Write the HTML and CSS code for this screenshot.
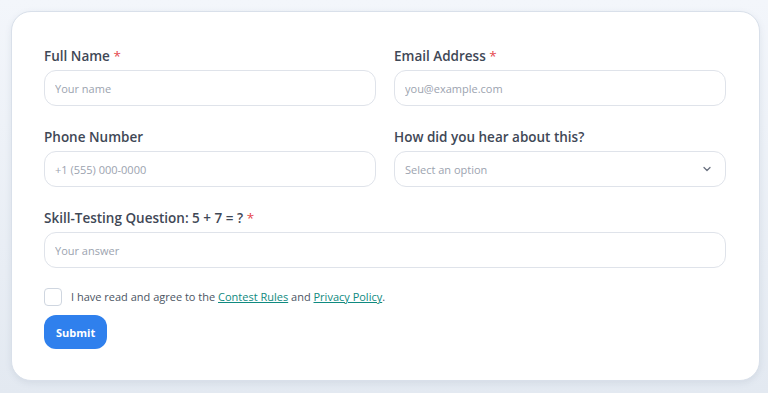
FILE: index.html
```html
<!DOCTYPE html>
<html lang="en">
<head>
    <meta charset="UTF-8">
    <meta name="viewport" content="width=device-width, initial-scale=1.0">
    <title>Contest Entry Form</title>
    <link rel="stylesheet" href="styles.css">
</head>
<body>

<div class="card">
    <form class="entry-form">
        <div class="grid">
            <div class="field">
                <label for="name">Full Name <span class="req">*</span></label>
                <input type="text" id="name" placeholder="Your name">
            </div>
            <div class="field">
                <label for="email">Email Address <span class="req">*</span></label>
                <input type="email" id="email" placeholder="you@example.com">
            </div>
            <div class="field">
                <label for="phone">Phone Number</label>
                <input type="tel" id="phone" placeholder="+1 (555) 000-0000">
            </div>
            <div class="field">
                <label for="source">How did you hear about this?</label>
                <div class="select-wrap">
                    <select id="source">
                        <option>Select an option</option>
                        <option>Social media</option>
                        <option>A friend</option>
                        <option>Email newsletter</option>
                    </select>
                    <svg class="chevron" width="10" height="10" viewBox="0 0 10 10">
                        <path d="M2 3.5 L5 6.5 L8 3.5" fill="none" stroke="#6b7280" stroke-width="1.3" stroke-linecap="round" stroke-linejoin="round"/>
                    </svg>
                </div>
            </div>
            <div class="field full">
                <label for="answer">Skill-Testing Question: 5 + 7 = ? <span class="req">*</span></label>
                <input type="text" id="answer" placeholder="Your answer">
            </div>
        </div>

        <div class="agree">
            <input type="checkbox" id="agree" class="check">
            <label for="agree">I have read and agree to the <a href="#">Contest Rules</a> and <a href="#">Privacy Policy</a>.</label>
        </div>

        <button type="button" class="submit-btn">Submit</button>
    </form>
</div>

</body>
</html>
```

FILE: styles.css
```css
html, body {
    height: 100%;
}

body {
    margin: 0;
    padding: 11px 8px 11px 11px;
    box-sizing: border-box;
    font-family: "Open Sans", "Noto Sans", sans-serif;
    background: linear-gradient(180deg, #f3f6fb 0%, #e3e9f1 100%);
}

.card {
    background-color: #fff;
    border: 1px solid #d9e0ea;
    border-radius: 20px;
    padding: 34px 33px 31px 32px;
    box-shadow: 0 2px 6px rgba(100, 116, 139, 0.12);
}

.grid {
    display: grid;
    grid-template-columns: 1fr 1fr;
    gap: 21px 18px;
}

.field {
    display: flex;
    flex-direction: column;
}

.field.full {
    grid-column: 1 / 3;
}

.field label {
    font-size: 13.5px;
    font-weight: 600;
    line-height: 21px;
    color: #3f4856;
    margin-bottom: 3px;
}

.req {
    color: #e5484d;
    font-weight: 400;
}

input[type="text"],
input[type="email"],
input[type="tel"],
select {
    height: 36px;
    box-sizing: border-box;
    border: 1px solid #dfe3ea;
    border-radius: 12px;
    padding: 0 10px;
    font-family: inherit;
    font-size: 11px;
    color: #374151;
    background-color: #fff;
    outline: none;
}

input::placeholder {
    color: #9ca3af;
}

.select-wrap {
    position: relative;
}

select {
    width: 100%;
    appearance: none;
    color: #9ca3af;
}

.chevron {
    position: absolute;
    right: 14px;
    top: 13px;
}

.agree {
    display: flex;
    align-items: center;
    margin-top: 20px;
    font-size: 11px;
    line-height: 18px;
    color: #4b5563;
}

.check {
    appearance: none;
    width: 18px;
    height: 18px;
    margin: 0 9px 0 0;
    border: 1.5px solid #cfd6e0;
    border-radius: 4px;
    background-color: #fff;
}

.agree a {
    color: #0f8a80;
}

.submit-btn {
    display: block;
    margin-top: 9px;
    height: 34px;
    padding: 0 12px;
    border: none;
    border-radius: 12px;
    background-color: #2f80ed;
    color: #fff;
    font-family: inherit;
    font-size: 11px;
    font-weight: 700;
    cursor: pointer;
}

.submit-btn:hover {
    background-color: #1f6fdc;
}
```
